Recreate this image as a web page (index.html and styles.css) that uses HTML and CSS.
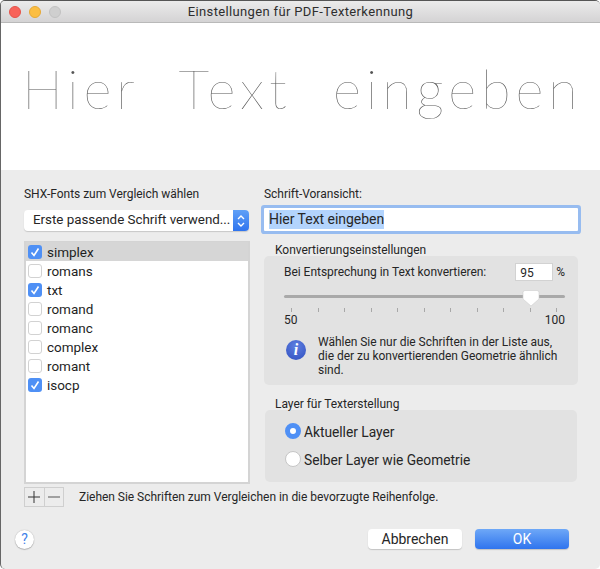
FILE: index.html
```html
<!DOCTYPE html>
<html lang="de">
<head>
<meta charset="utf-8">
<title>Einstellungen für PDF-Texterkennung</title>
<link rel="stylesheet" href="styles.css">
</head>
<body>
<div class="window">
  <div class="titlebar">
    <div class="lights"><span class="light red"></span><span class="light yellow"></span><span class="light gray"></span></div>
    <div class="title">Einstellungen für PDF-Texterkennung</div>
    <div></div>
  </div>
  <div class="preview"><span class="preview-text">Hier Text eingeben</span></div>
  <div class="content">
    <div class="columns">
      <div class="left">
        <div class="label">SHX-Fonts zum Vergleich wählen</div>
        <div class="select">
          <span class="select-text">Erste passende Schrift verwend...</span>
          <span class="stepper"><svg width="10" height="16" viewBox="0 0 10 16"><path d="M2 6 L5 3 L8 6 M2 10 L5 13 L8 10" fill="none" stroke="#fff" stroke-width="1.4"/></svg></span>
        </div>
        <div class="list">
          <div class="row selected"><span class="check on"><svg width="14" height="14" viewBox="0 0 14 14"><path d="M3.5 7.5 L6 10.5 L10.5 3.5" fill="none" stroke="#fff" stroke-width="1.6"/></svg></span>simplex</div>
          <div class="row"><span class="check"></span>romans</div>
          <div class="row"><span class="check on"><svg width="14" height="14" viewBox="0 0 14 14"><path d="M3.5 7.5 L6 10.5 L10.5 3.5" fill="none" stroke="#fff" stroke-width="1.6"/></svg></span>txt</div>
          <div class="row"><span class="check"></span>romand</div>
          <div class="row"><span class="check"></span>romanc</div>
          <div class="row"><span class="check"></span>complex</div>
          <div class="row"><span class="check"></span>romant</div>
          <div class="row"><span class="check on"><svg width="14" height="14" viewBox="0 0 14 14"><path d="M3.5 7.5 L6 10.5 L10.5 3.5" fill="none" stroke="#fff" stroke-width="1.6"/></svg></span>isocp</div>
        </div>
      </div>
      <div class="right">
        <div class="label">Schrift-Voransicht:</div>
        <div class="textfield"><span class="selection">Hier Text eingeben</span></div>
        <div class="group-label">Konvertierungseinstellungen</div>
        <div class="box convert">
          <div class="match-row">
            <span>Bei Entsprechung in Text konvertieren:</span>
            <span class="match-value"><span class="number">95</span><span>%</span></span>
          </div>
          <div class="slider">
            <div class="track"></div>
            <svg class="thumb" width="18" height="17" viewBox="0 0 18 17"><path d="M3 .5 H15 A2 2 0 0 1 17 2.5 V9 L9 16 L1 9 V2.5 A2 2 0 0 1 3 .5 Z" fill="#fff" stroke="#cfcfcf" stroke-width=".6"/></svg>
            <div class="ticks"><i></i><i></i><i></i><i></i><i></i><i></i><i></i><i></i><i></i><i></i><i></i></div>
            <div class="scale"><span>50</span><span>100</span></div>
          </div>
          <div class="info">
            <span class="info-icon">i</span>
            <p>Wählen Sie nur die Schriften in der Liste aus, die der zu konvertierenden Geometrie ähnlich sind.</p>
          </div>
        </div>
        <div class="group-label layer-label">Layer für Texterstellung</div>
        <div class="box layer">
          <div class="radio-row"><span class="radio on"></span>Aktueller Layer</div>
          <div class="radio-row"><span class="radio"></span>Selber Layer wie Geometrie</div>
        </div>
      </div>
    </div>
    <div class="hint-row">
      <div class="plusminus"><span class="pm"><svg width="14" height="14" viewBox="0 0 14 14"><path d="M7 1 V13 M1 7 H13" stroke="#333" stroke-width="1"/></svg></span><span class="pm"><svg width="14" height="14" viewBox="0 0 14 14"><path d="M1 7 H13" stroke="#555" stroke-width="1"/></svg></span></div>
      <span class="hint">Ziehen Sie Schriften zum Vergleichen in die bevorzugte Reihenfolge.</span>
    </div>
    <div class="footer">
      <span class="help">?</span>
      <div class="buttons"><span class="btn">Abbrechen</span><span class="btn primary">OK</span></div>
    </div>
  </div>
</div>
</body>
</html>
```

FILE: styles.css
```css
* { box-sizing: border-box; }
html, body { margin: 0; padding: 0; background: #fff; }
body { width: 600px; height: 569px; overflow: hidden; font-family: Roboto, "Liberation Sans", sans-serif; font-size: 12px; letter-spacing: -.03px; color: #262626; }
.window { width: 600px; height: 569px; display: flex; flex-direction: column; background: #ececec; border-top: 1px solid #555; border-left: 1px solid #666; border-radius: 5px; overflow: hidden; }
.titlebar { height: 22px; flex: none; display: grid; grid-template-columns: 1fr auto 1fr; align-items: center; background: linear-gradient(#ebebeb, #d4d3d4); border-bottom: 1px solid #b9b9b9; }
.lights { display: flex; gap: 8px; padding-left: 8px; }
.light { width: 12px; height: 12px; border-radius: 50%; }
.red { background: #f8635a; border: 1px solid #e5534a; }
.yellow { background: #fbbe42; border: 1px solid #e6a935; }
.gray { background: #cfcfcf; border: 1px solid #c2c2c2; }
.title { font-size: 13px; letter-spacing: .35px; color: #2e2e2e; }
.preview { height: 147px; flex: none; background: #fff; display: flex; justify-content: center; padding: 31px 0 0 4px; }
.preview-text { font-family: Lato, sans-serif; font-weight: 100; font-size: 54px; line-height: 70px; letter-spacing: 5px; word-spacing: 21px; color: #555; white-space: pre; }
.content { flex: 1; padding: 17px 0 0 23px; }
.columns { display: grid; grid-template-columns: 226px 314px; column-gap: 14px; }
.label { height: 14px; line-height: 14px; }
.select { margin-top: 9px; height: 21px; width: 225px; display: flex; justify-content: space-between; background: #fff; border-radius: 4px; box-shadow: 0 1px 1px #c8c8c8; }
.select-text { padding-left: 9px; font-size: 13.4px; line-height: 20px; white-space: nowrap; }
.stepper { width: 16px; flex: none; background: linear-gradient(#5fa0f7, #2f74ee); border-radius: 0 4px 4px 0; display: flex; align-items: center; justify-content: center; }
.list { margin-top: 10px; height: 243px; background: #fff; border: 2px solid #d4d4d4; border-width: 1px 2px 2px 2px; }
.row { height: 19px; display: flex; align-items: center; font-size: 13.5px; padding-left: 2px; color: #1f1f1f; }
.row.selected { background: #d6d6d6; }
.check { width: 14px; height: 14px; margin-right: 5px; border-radius: 3px; background: #fff; border: 1px solid #d2d2d2; flex: none; display: block; }
.check.on { background: #4f90f5; border: 0; }
.check svg { display: block; }
.textfield { margin-top: 7px; height: 23px; padding-left: 5px; background: #fff; box-shadow: 0 0 0 3px #97bcf0; border-radius: 1px; font-size: 14px; line-height: 23px; }
.selection { background: #b3d4fd; display: inline-block; height: 19px; line-height: 19px; vertical-align: top; margin-top: 2px; }
.group-label { margin: 11px 0 0 11px; height: 14px; line-height: 16px; }
.box { background: #e2e2e2; border-radius: 5px; }
.convert { height: 129px; padding: 7px 13px 0 20px; }
.match-row { display: flex; justify-content: space-between; align-items: center; height: 18px; }
.match-value { display: flex; align-items: center; gap: 3px; }
.number { width: 38px; height: 18px; line-height: 18px; padding-left: 4px; background: #fff; border: 1px solid #d2d2d2; font-size: 12px; }
.slider { position: relative; margin-top: 14px; }
.track { height: 3px; background: #a9a9a9; border-radius: 2px; }
.thumb { position: absolute; left: 238px; top: -5px; }
.ticks { display: flex; justify-content: space-between; margin: 10px 8px 0 7px; }
.ticks i { width: 1px; height: 4px; background: #a8a8a8; display: block; }
.scale { display: flex; justify-content: space-between; margin-top: 1px; line-height: 14px; }
.info { display: flex; margin: 8px 0 0 2px; gap: 12px; align-items: flex-start; }
.info-icon { width: 20px; height: 20px; margin-top: 5px; flex: none; border-radius: 50%; background: radial-gradient(circle at 50% 30%, #5f7fe0, #2f4fc0); color: #fff; font: italic bold 16px/20px "Liberation Serif", serif; text-align: center; }
.info p { margin: 0; line-height: 14px; }
.layer-label { margin-top: 11px; }
.layer { height: 72px; margin: 0 1px; padding: 12px 0 0 20px; }
.radio-row { display: flex; align-items: center; height: 18px; padding-top: 2px; margin-bottom: 10px; font-size: 13.8px; gap: 3px; }
.radio { width: 16px; height: 16px; margin-top: -2px; border-radius: 50%; background: #fff; border: 1px solid #c6c6c6; flex: none; }
.radio.on { border: 5px solid #4f90f5; }
.hint-row { display: flex; align-items: center; margin-top: 3px; height: 20px; }
.plusminus { display: flex; width: 40px; height: 20px; background: #ececec; border: 1px solid #cfcfcf; flex: none; }
.pm { flex: 1; display: flex; align-items: center; justify-content: center; }
.pm + .pm { border-left: 1px solid #cfcfcf; }
.hint { margin-left: 15px; }
.footer { display: flex; align-items: center; justify-content: space-between; margin-top: 22px; padding: 0 31px 0 0; margin-left: -9px; }
.help { width: 19px; height: 19px; border-radius: 50%; background: #fff; box-shadow: 0 0 1px #999, 0 1px 1px #bbb; color: #3f7fe8; text-align: center; line-height: 19px; font-size: 14px; }
.buttons { display: flex; gap: 13px; }
.btn { width: 94px; height: 20px; border-radius: 4px; background: #fff; box-shadow: 0 1px 1px #c4c4c4; text-align: center; line-height: 20px; font-size: 14px; }
.btn.primary { background: linear-gradient(#6ea8f7, #2f74ee); color: #fff; }
```
